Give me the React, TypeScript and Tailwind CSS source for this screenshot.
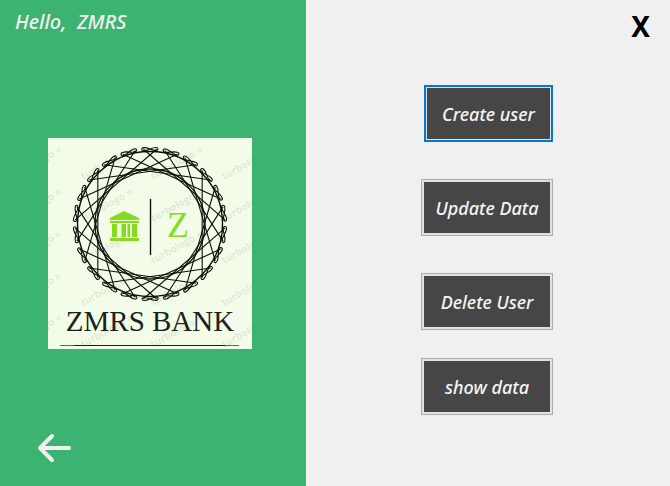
const TOOTH_COUNT = 22;
const CENTER_X = 102;
const CENTER_Y = 86;

function pointAt(angle: number, radius: number) {
  const rad = ((angle - 90) * Math.PI) / 180;
  return {
    x: CENTER_X + radius * Math.cos(rad),
    y: CENTER_Y + radius * Math.sin(rad),
  };
}

function GuillocheRing() {
  const step = 360 / TOOTH_COUNT;
  const teeth = Array.from({ length: TOOTH_COUNT }, (_, i) => i * step);
  return (
    <g fill="none" stroke="#0b0f08" strokeWidth="1">
      <circle cx={CENTER_X} cy={CENTER_Y} r="72.5" strokeWidth="1.4" />
      <circle cx={CENTER_X} cy={CENTER_Y} r="55" strokeWidth="1.3" />
      {teeth.map((angle) => {
        const a = pointAt(angle - 5, 75);
        const b = pointAt(angle + step * 5 + 5, 75);
        return (
          <g key={angle}>
            <path d={`M${a.x} ${a.y}L${b.x} ${b.y}`} strokeWidth="1.1" />
            <g transform={`rotate(${angle} ${CENTER_X} ${CENTER_Y})`}>
              <path
                d="M94 12C93 9 97 9 102 11S110 13 110 11S107 9 102 11S95 14 94 12Z"
                strokeWidth="1.1"
              />
            </g>
          </g>
        );
      })}
    </g>
  );
}

function Watermark() {
  const marks = [-36, 35, 105, 176].flatMap((x) =>
    [0, 42, 84, 126, 168, 210].map((y) => ({ x, y })),
  );
  return (
    <g fill="#59664d" fillOpacity="0.14" fontSize="10" fontWeight="700" fontFamily='"Open Sans", sans-serif'>
      {marks.map(({ x, y }) => (
        <text key={`${x}-${y}`} transform={`translate(${x} ${y}) rotate(-29)`}>
          turbologo =
        </text>
      ))}
    </g>
  );
}

function BankLogo() {
  return (
    <svg
      role="img"
      aria-label="ZMRS Bank"
      viewBox="0 0 204 211"
      className="block h-[211px] w-[204px] bg-[#f3fce9]"
    >
      <Watermark />
      <GuillocheRing />
      <g fill="#84dc1c">
        <path d="M76 73L91 80V82H62V80Z" />
        <path d="M62 83H91V85H62Z" />
        <path d="M64 86H69V99H64ZM73.500 86H78V99H73.500ZM79.500 86H82V99H79.500ZM84 86H89V99H84Z" />
        <path d="M62 100H91V103H62Z" />
      </g>
      <path d="M102.500 61V117" stroke="#0b0f08" strokeWidth="1.4" />
      <text x="119" y="99" fontSize="36" fill="#84dc1c" fontFamily='"Liberation Serif", serif'>
        Z
      </text>
      <text x="102" y="193" textAnchor="middle" fontSize="29" fill="#1c2218" fontFamily='"Liberation Serif", serif'>
        ZMRS BANK
      </text>
      <path d="M12 207.500H191" stroke="#3c4337" strokeWidth="0.8" />
      <path d="M26 207.500H177" stroke="#10150d" strokeWidth="0.9" />
    </svg>
  );
}

const buttonBase =
  "h-[57px] border bg-[#464646] text-lg font-medium italic text-[#f4f4f4]";
const plainButton = `${buttonBase} w-[132px] border-[#adadad] ring-2 ring-inset ring-[#e1e1e1]`;
const focusedButton = `${buttonBase} w-[129px] border-2 border-[#0078d7] ring-1 ring-inset ring-[#e1e1e1]`;

export default function App() {
  return (
    <main className='grid min-h-screen grid-cols-[306fr_364fr] bg-[#f0f0f0] font-["Noto_Sans",sans-serif]'>
      <section className="flex flex-col justify-between bg-[#3cb371] pt-2 pb-5">
        <h1 className="pl-[15px] text-[20px] leading-7 font-medium whitespace-pre text-[#f0f0f0] italic">
          {"Hello,  ZMRS"}
        </h1>
        <div className="pt-5 pl-12">
          <BankLogo />
        </div>
        <button type="button" aria-label="Back" className="ml-9 w-9">
          <svg viewBox="0 0 36 36" className="block size-9" fill="none" stroke="#f0f0f0" strokeWidth="4" strokeLinecap="round" strokeLinejoin="round">
            <path d="M33 18H4M16 6L4 18L16 30" />
          </svg>
        </button>
      </section>

      <section className="flex flex-col">
        <header className="flex justify-end pt-2 pr-5">
          <button type="button" aria-label="Close" className="text-[28px] leading-9 font-bold text-black">
            X
          </button>
        </header>
        <nav aria-label="User actions" className="flex flex-col items-center pt-[41px] pr-0.5">
          <div className="flex flex-col items-end gap-[37px]">
            <button type="button" className={focusedButton}>Create user</button>
            <button type="button" className={plainButton}>Update Data</button>
            <button type="button" className={plainButton}>Delete User</button>
          </div>
          <button type="button" className={`${plainButton} mt-7`}>show data</button>
        </nav>
      </section>
    </main>
  );
}
